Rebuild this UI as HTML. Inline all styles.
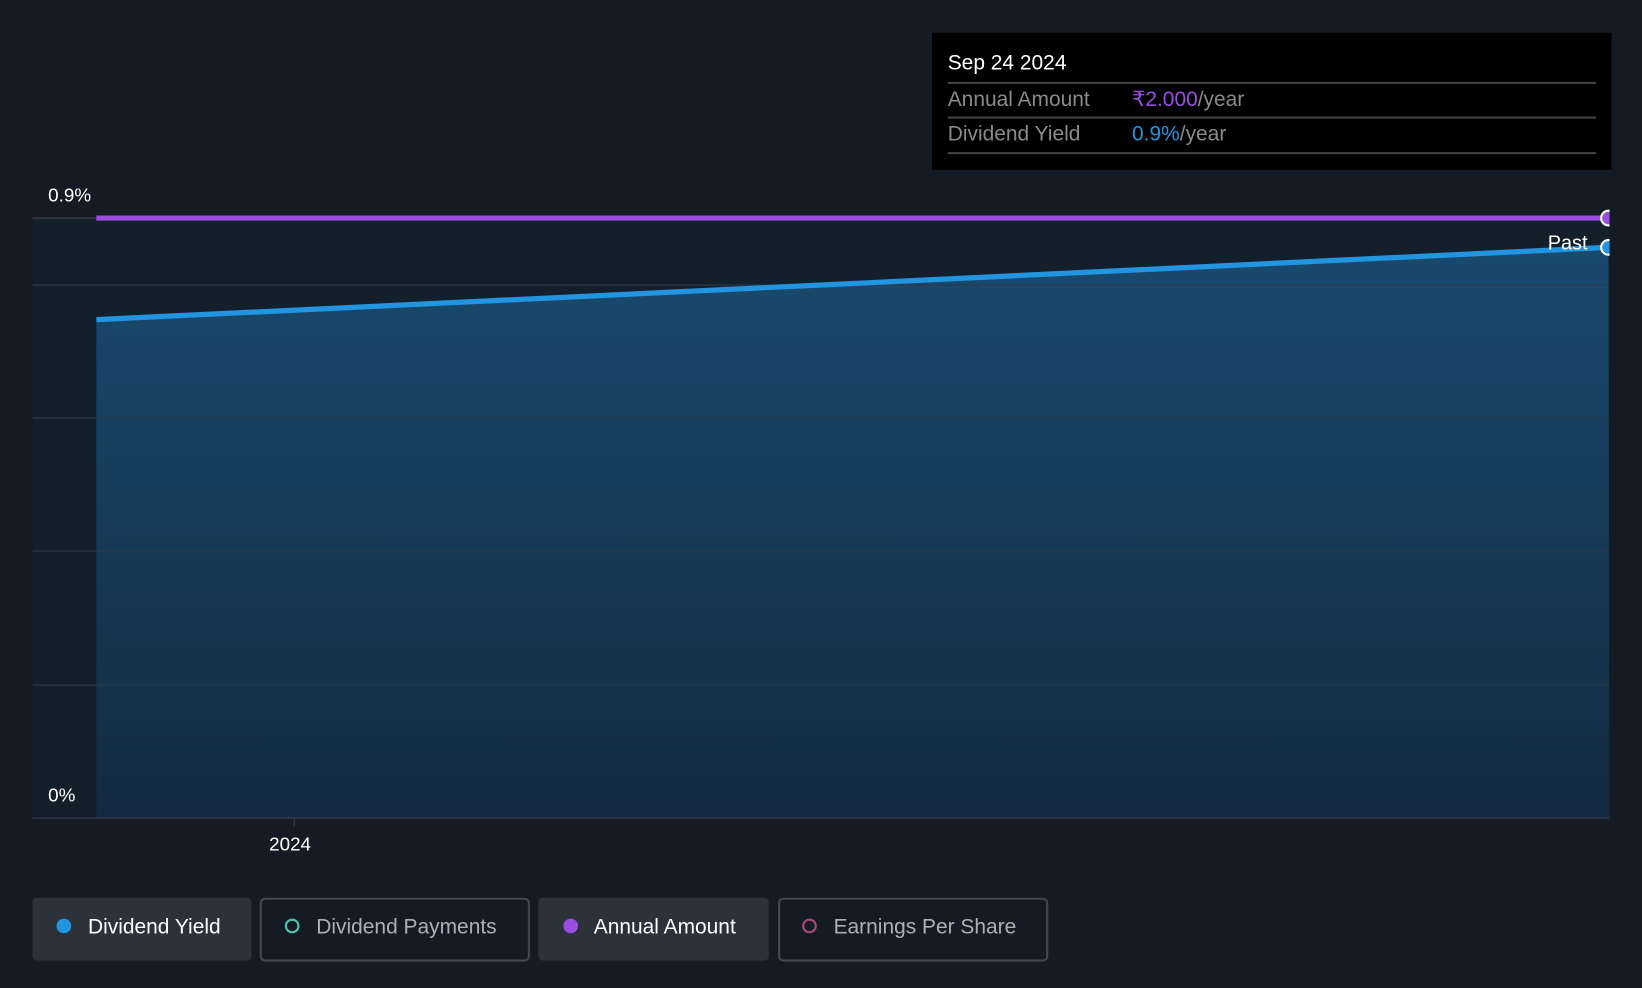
<!DOCTYPE html>
<html><head><meta charset="utf-8"><style>
html,body{margin:0;padding:0;background:#151b24;overflow:hidden}
svg{display:block}
text{font-family:"Liberation Sans",sans-serif}
</style></head><body>
<svg width="1642" height="988" viewBox="0 0 1568 943" xmlns="http://www.w3.org/2000/svg">
<defs>
<linearGradient id="g" x1="0" y1="0" x2="0" y2="1">
<stop offset="0" stop-color="#184a6e"/>
<stop offset="1" stop-color="#142a40"/>
</linearGradient>
<clipPath id="c"><rect x="0" y="190" width="1537" height="600"/></clipPath>
</defs>
<rect width="1568" height="943" fill="#151b24"/>
<rect x="31" y="208" width="1506" height="573" fill="#141f2c"/>
<polygon points="92,305 1536,236 1537,781 92,781" fill="url(#g)"/>
<g stroke="#2a3a4c" stroke-width="1">
<line x1="31" y1="272" x2="1537" y2="272"/>
<line x1="31" y1="399" x2="1537" y2="399"/>
<line x1="31" y1="526" x2="1537" y2="526"/>
<line x1="31" y1="654" x2="1537" y2="654"/>
</g>
<line x1="31" y1="208" x2="1537" y2="208" stroke="#3a4250"/>
<line x1="31" y1="781" x2="1537" y2="781" stroke="#3a4250"/>
<line x1="281" y1="781" x2="281" y2="789" stroke="#3a4250"/>
<g clip-path="url(#c)">
<line x1="92" y1="208" x2="1535" y2="208" stroke="#9b4de0" stroke-width="5"/>
<line x1="92" y1="305" x2="1535" y2="236" stroke="#2394e0" stroke-width="5"/>
<circle cx="1536" cy="208" r="7" fill="#9b4de0" stroke="#fff" stroke-width="2"/>
<circle cx="1536" cy="236" r="7" fill="#2394e0" stroke="#fff" stroke-width="2"/>
</g>
<text x="1478" y="238" fill="#fff" font-size="19">Past</text>
<text x="46" y="192" fill="#fff" font-size="18">0.9%</text>
<text x="46" y="765" fill="#fff" font-size="18">0%</text>
<text x="257" y="812" fill="#fff" font-size="18">2024</text>
<rect x="890" y="31" width="649" height="131" fill="#000"/>
<text x="905" y="66" fill="#fff" font-size="20">Sep 24 2024</text>
<g stroke="#444" stroke-width="2">
<line x1="905" y1="79" x2="1524" y2="79"/>
<line x1="905" y1="112" x2="1524" y2="112"/>
<line x1="905" y1="146" x2="1524" y2="146"/>
</g>
<text x="905" y="101" fill="#8a8a8a" font-size="20">Annual Amount</text>
<text x="1081" y="101" font-size="20" fill="#9b4de0">₹2.000<tspan fill="#8a8a8a">/year</tspan></text>
<text x="905" y="134" fill="#8a8a8a" font-size="20">Dividend Yield</text>
<text x="1081" y="134" font-size="20" fill="#2394e0">0.9%<tspan fill="#8a8a8a">/year</tspan></text>
<rect x="31" y="857" width="209" height="60" rx="4" fill="#2d313a"/>
<circle cx="61" cy="884" r="7" fill="#2394e0"/>
<text x="84" y="891" fill="#fff" font-size="20">Dividend Yield</text>
<rect x="249" y="858" width="256" height="59" rx="4" fill="none" stroke="#444851" stroke-width="2"/>
<circle cx="279" cy="884" r="6" fill="none" stroke="#4fc4b8" stroke-width="2"/>
<text x="302" y="891" fill="#b0b0b0" font-size="20">Dividend Payments</text>
<rect x="514" y="857" width="220" height="60" rx="4" fill="#2d313a"/>
<circle cx="545" cy="884" r="7" fill="#9b4de0"/>
<text x="567" y="891" fill="#fff" font-size="20">Annual Amount</text>
<rect x="744" y="858" width="256" height="59" rx="4" fill="none" stroke="#444851" stroke-width="2"/>
<circle cx="773" cy="884" r="6" fill="none" stroke="#b0457c" stroke-width="2"/>
<text x="796" y="891" fill="#b0b0b0" font-size="20">Earnings Per Share</text>
</svg>
</body></html>
